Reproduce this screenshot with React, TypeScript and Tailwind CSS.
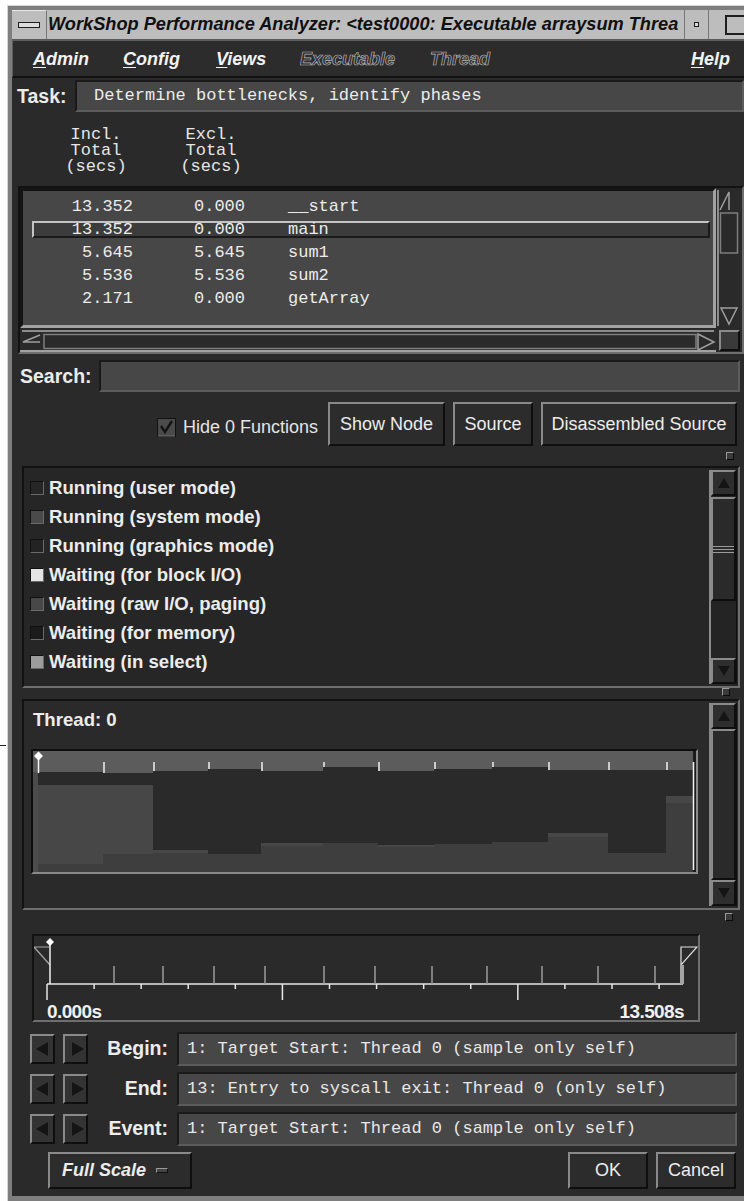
import React from 'react';

const sans = "font-['Liberation_Sans',Arial,sans-serif]";
const mono = "font-['Liberation_Mono','DejaVu_Sans_Mono',monospace]";
const raised = 'border-2 border-t-[#8a8a8a] border-l-[#8a8a8a] border-r-[#0e0e0e] border-b-[#0e0e0e]';
const sunken = 'border-2 border-t-[#121212] border-l-[#121212] border-r-[#6e6e6e] border-b-[#6e6e6e]';
const field = 'bg-[#474747] border-2 border-t-[#1a1a1a] border-l-[#1a1a1a] border-r-[#5c5c5c] border-b-[#5c5c5c]';

const functions = [
  { incl: '13.352', excl: '0.000', name: '__start' },
  { incl: '13.352', excl: '0.000', name: 'main', selected: true },
  { incl: '5.645', excl: '5.645', name: 'sum1' },
  { incl: '5.536', excl: '5.536', name: 'sum2' },
  { incl: '2.171', excl: '0.000', name: 'getArray' },
];

const states = [
  { label: 'Running (user mode)', swatch: 'bg-[#262626]' },
  { label: 'Running (system mode)', swatch: 'bg-[#4a4a4a]' },
  { label: 'Running (graphics mode)', swatch: 'bg-[#232323]' },
  { label: 'Waiting (for block I/O)', swatch: 'bg-[#e4e4e4]' },
  { label: 'Waiting (raw I/O, paging)', swatch: 'bg-[#484848]' },
  { label: 'Waiting (for memory)', swatch: 'bg-[#1b1b1b]' },
  { label: 'Waiting (in select)', swatch: 'bg-[#9c9c9c]' },
];

// per sample: x0, x1, end of top band, end of dark band, end of mid band
const samples = [
  [40, 105, 772, 785, 864],
  [105, 155, 773, 785, 854],
  [155, 210, 771, 850, 853],
  [210, 263, 769, 854, 854],
  [263, 325, 771, 843, 846],
  [325, 380, 767, 843, 843],
  [380, 436, 771, 845, 847],
  [436, 494, 769, 844, 844],
  [494, 550, 767, 842, 842],
  [550, 610, 770, 833, 837],
  [610, 668, 770, 853, 853],
  [668, 695, 770, 796, 803],
];

const sampleMarks = [114, 163, 214, 265, 324, 375, 432, 487, 542, 598, 655];

const events = [
  { label: 'Begin:', value: '1: Target Start: Thread 0 (sample only self)' },
  { label: 'End:', value: '13: Entry to syscall exit: Thread 0 (only self)' },
  { label: 'Event:', value: '1: Target Start: Thread 0 (sample only self)' },
];

function Sash({ left }: { left: string }) {
  return <div className={`h-[8px] w-[8px] bg-[#3a3a3a] border border-t-[#9a9a9a] border-l-[#9a9a9a] border-r-[#0a0a0a] border-b-[#0a0a0a] ${left}`} />;
}

function ArrowBtn({ dir }: { dir: 'up' | 'down' }) {
  return (
    <div className={`flex h-[26px] shrink-0 items-center justify-center bg-[#2e2e2e] ${raised}`}>
      <svg width="14" height="12" viewBox="0 0 14 12">
        <polygon points={dir === 'up' ? '7,1 13,11 1,11' : '1,1 13,1 7,11'} fill="#151515" />
      </svg>
    </div>
  );
}

function ScrollBar({ thumb, grip }: { thumb: string; grip?: boolean }) {
  return (
    <div className="flex w-[28px] flex-col border-l-2 border-l-[#8a8a8a] border-r border-r-[#101010] bg-[#242424]">
      <ArrowBtn dir="up" />
      <div className={`flex flex-col justify-center bg-[#2a2a2a] ${raised} ${thumb}`}>
        {grip && (
          <div className="flex flex-col gap-[2px]">
            <div className="h-[1px] bg-[#9a9a9a]" />
            <div className="h-[1px] bg-[#9a9a9a]" />
            <div className="h-[1px] bg-[#9a9a9a]" />
          </div>
        )}
      </div>
      <div className="flex-1" />
      <ArrowBtn dir="down" />
    </div>
  );
}

function Button({ label, className }: { label: string; className: string }) {
  return (
    <div className={`flex items-center justify-center bg-[#2c2c2c] text-[18px] text-[#ececec] ${raised} ${className}`}>
      {label}
    </div>
  );
}

function TitleBar() {
  return (
    <div className="flex h-[30px] bg-[#bdbdbd] border-b border-b-[#5a5a5a]">
      <div className="flex w-[35px] items-center justify-center border-r border-r-[#777] border-t border-t-[#e8e8e8]">
        <div className="h-[6px] w-[22px] border border-[#1e1e1e] bg-[#dcdcdc]" />
      </div>
      <div className="w-[637px] overflow-hidden whitespace-nowrap pl-[1px] text-[18.2px] font-bold italic leading-[29px] text-[#101010]">
        WorkShop Performance Analyzer: &lt;test0000: Executable arraysum Threa
      </div>
      <div className="flex w-[24px] items-center justify-center border-l border-l-[#777]">
        <div className="h-[5px] w-[5px] border border-[#1e1e1e] bg-[#dcdcdc]" />
      </div>
      <div className="flex w-[36px] items-center justify-end border-l border-l-[#777]">
        <div className="h-[20px] w-[19px] border-2 border-r-0 border-[#1e1e1e]" />
      </div>
    </div>
  );
}

function MenuBar() {
  const off = 'text-transparent [-webkit-text-stroke:0.7px_#b4b4b4]';
  return (
    <div className="flex h-[38px] items-center border-t border-l border-[#5e5e5e] border-b-2 border-b-[#111] bg-[#2c2c2c] pl-[20px] pt-[2px] text-[18px] font-bold italic text-[#f2f2f2]">
      <span className="w-[90px]"><span className="underline underline-offset-2">A</span>dmin</span>
      <span className="w-[93px]"><span className="underline underline-offset-2">C</span>onfig</span>
      <span className="w-[84px]"><span className="underline underline-offset-2">V</span>iews</span>
      <span className={`w-[130px] ${off}`}>Executable</span>
      <span className={`flex-1 ${off}`}>Thread</span>
      <span className="pr-[14px]"><span className="underline underline-offset-2">H</span>elp</span>
    </div>
  );
}

function FunctionList() {
  return (
    <div className={`ml-[6px] flex h-[168px] w-[726px] flex-col ${sunken}`}>
      <div className="flex h-[140px]">
        <div className="w-[696px] border-[3px] border-t-[#141414] border-l-[#141414] border-r-[#a2a2a2] border-b-[#a2a2a2] bg-[#474747] pt-[4px]">
          {functions.map((f) => (
            <div key={f.name} className={`relative flex h-[23px] items-center ${mono} text-[17px] text-[#ececec]`}>
              {f.selected && (
                <div className="absolute left-[9px] right-[3px] top-[3px] bottom-[3px] border-2 border-t-[#c4c4c4] border-l-[#c4c4c4] border-r-[#1a1a1a] border-b-[#1a1a1a] bg-[#3c3c3c]" />
              )}
              <span className="relative w-[110px] text-right">{f.incl}</span>
              <span className="relative w-[112px] text-right">{f.excl}</span>
              <span className="relative ml-[43px]">{f.name}</span>
            </div>
          ))}
        </div>
        <svg width="24" height="140" viewBox="0 0 24 140" className="ml-[1px]">
          <rect x="0" y="0" width="24" height="140" fill="#2a2a2a" />
          <line x1="1" y1="2" x2="1" y2="138" stroke="#8c8c8c" strokeWidth="2" />
          <polyline points="3,22 12,4 12,22" fill="none" stroke="#9e9e9e" strokeWidth="1.5" />
          <rect x="3.5" y="25" width="17" height="40" fill="none" stroke="#7e7e7e" strokeWidth="1.5" />
          <polygon points="4,120 20,120 12,136" fill="none" stroke="#9e9e9e" strokeWidth="1.5" />
        </svg>
      </div>
      <div className="mt-[2px] flex h-[22px]">
        <svg width="696" height="22" viewBox="0 0 696 22">
          <rect x="0" y="0" width="696" height="22" fill="#2a2a2a" />
          <line x1="2" y1="1" x2="694" y2="1" stroke="#8c8c8c" strokeWidth="2" />
          <polyline points="20,5 3,12 20,12" fill="none" stroke="#9e9e9e" strokeWidth="1.5" />
          <rect x="24" y="4.5" width="652" height="14" fill="none" stroke="#7e7e7e" strokeWidth="1.5" />
          <polygon points="678,4 694,12 678,20" fill="none" stroke="#9e9e9e" strokeWidth="1.5" />
          <line x1="0" y1="21" x2="696" y2="21" stroke="#a2a2a2" strokeWidth="2" />
        </svg>
        <div className={`ml-[3px] h-[21px] w-[21px] bg-[#3a3a3a] ${raised}`} />
      </div>
    </div>
  );
}

function ThreadChart() {
  return (
    <svg width="663" height="121" viewBox="35 751 663 121" className="block">
      <rect x="35" y="751" width="663" height="121" fill="#1c1c1c" />
      <rect x="35" y="751" width="5" height="21" fill="#5c5c5c" />
      <rect x="35" y="772" width="5" height="100" fill="#4c4c4c" />
      {samples.map(([x0, x1, a, b, c]) => (
        <g key={x0}>
          <rect x={x0} y="751" width={x1 - x0} height={a - 751} fill="#5c5c5c" />
          <rect x={x0} y={a} width={x1 - x0} height={b - a} fill="#2a2a2a" />
          <rect x={x0} y={b} width={x1 - x0} height={c - b} fill="#474747" />
          <rect x={x0} y={c} width={x1 - x0} height={872 - c} fill="#3e3e3e" />
        </g>
      ))}
      {samples.slice(1).map(([x0, , a]) => (
        <line key={x0} x1={x0 + 1} y1="762" x2={x0 + 1} y2={a} stroke="#efefef" strokeWidth="1.5" />
      ))}
      <line x1="40.5" y1="756" x2="40.5" y2="773" stroke="#f4f4f4" strokeWidth="1.5" />
      <polygon points="40.5,751.5 45,756 40.5,760.5 36,756" fill="#ffffff" />
      <line x1="695.5" y1="762" x2="695.5" y2="870" stroke="#f4f4f4" strokeWidth="1.5" />
    </svg>
  );
}

function Timeline() {
  const step = 636 / 13.508;
  return (
    <div className={`ml-[20px] mt-[2px] h-[88px] w-[668px] bg-[#2a2a2a] ${sunken}`}>
      <svg width="664" height="68" viewBox="34 934 664 68" className="block">
        <line x1="47" y1="982" x2="683" y2="982" stroke="#e6e6e6" strokeWidth="1.5" />
        {Array.from({ length: 14 }, (_, k) => (
          <line key={k} x1={47 + step * k} y1="982" x2={47 + step * k} y2={k % 5 === 0 ? 998 : 987} stroke="#e6e6e6" strokeWidth="1.5" />
        ))}
        {sampleMarks.map((x) => (
          <line key={x} x1={x} y1="964" x2={x} y2="982" stroke="#9c9c9c" strokeWidth="1.5" />
        ))}
        <polyline points="50,945 34,945 50,963" fill="none" stroke="#a8a8a8" strokeWidth="1.2" />
        <line x1="50" y1="940" x2="50" y2="982" stroke="#f0f0f0" strokeWidth="1.5" />
        <polygon points="50,936 54,940 50,944 46,940" fill="#ffffff" />
        <polygon points="681,945 697,945 681,963" fill="none" stroke="#e0e0e0" strokeWidth="1.2" />
        <rect x="680" y="963" width="4" height="19" fill="#a4a4a4" />
      </svg>
      <div className="flex h-[16px] items-center justify-between pl-[13px] pr-[14px] text-[19px] font-bold tracking-[-0.6px] text-[#f0f0f0]">
        <span>0.000s</span>
        <span>13.508s</span>
      </div>
    </div>
  );
}

function StepButtons() {
  return (
    <div className="ml-[18px] flex gap-[8px]">
      {['4,13 16,6 16,20', '7,6 19,13 7,20'].map((pts) => (
        <div key={pts} className={`h-[30px] w-[25px] bg-[#333] ${raised}`}>
          <svg width="21" height="26" viewBox="0 0 21 26">
            <polygon points={pts} fill="#141414" />
          </svg>
        </div>
      ))}
    </div>
  );
}

export default function App() {
  return (
    <div className={`flex h-[1201px] w-[744px] overflow-hidden bg-white pt-[5px] ${sans}`}>
      {/* stray edge of a neighbouring window */}
      <div className="w-[7px] shrink-0">
        <div className="mt-[740px] h-[1px] w-[6px] bg-[#222]" />
      </div>
      <div className="h-[1196px] border-l border-t border-[#d4d4d4] bg-[#7e7e7e] pl-[4px] pt-[4px] pb-[5px]">
        <div className="flex h-full w-[732px] flex-col bg-[#2a2a2a] text-[#ececec]">
          <TitleBar />
          <MenuBar />

          {/* task */}
          <div className="flex h-[36px] items-start">
            <span className="w-[63px] pl-[5px] pt-[9px] text-[19.5px] font-bold leading-none">Task:</span>
            <div className={`mt-[2px] h-[32px] flex-1 pl-[17px] ${mono} text-[17px] leading-[28px] ${field}`}>
              Determine bottlenecks, identify phases
            </div>
          </div>

          {/* column headers */}
          <div className={`flex h-[72px] pt-[13px] ${mono} whitespace-pre text-[17px] leading-[16px] text-[#e6e6e6]`}>
            <div className="ml-[44px] w-[80px] text-center">{'Incl.\nTotal\n(secs)'}</div>
            <div className="ml-[35px] w-[80px] text-center">{'Excl.\nTotal\n(secs)'}</div>
          </div>

          <FunctionList />

          {/* search */}
          <div className="flex h-[42px] items-start">
            <span className="w-[87px] pl-[8px] pt-[13px] text-[19.5px] font-bold leading-none">Search:</span>
            <div className={`mt-[6px] h-[32px] w-[641px] ${field}`} />
          </div>

          {/* list options */}
          <div className="flex h-[56px] items-start pt-[6px]">
            <div className="ml-[145px] mt-[12px] flex items-center">
              <svg width="19" height="19" viewBox="0 0 19 19">
                <rect x="0.5" y="0.5" width="18" height="18" fill="#4a4a4a" stroke="#121212" />
                <line x1="1" y1="18" x2="18" y2="18" stroke="#6e6e6e" />
                <polyline points="4,8 8,14 15,3" fill="none" stroke="#141414" strokeWidth="2.4" />
              </svg>
              <span className="ml-[7px] text-[18px] text-[#e4e4e4]">Hide 0 Functions</span>
            </div>
            <Button label="Show Node" className="ml-[10px] h-[44px] w-[117px]" />
            <Button label="Source" className="ml-[8px] h-[44px] w-[80px]" />
            <Button label="Disassembled Source" className="ml-[8px] h-[44px] w-[196px]" />
          </div>

          <div className="flex h-[14px] items-start">
            <Sash left="ml-[714px]" />
          </div>

          {/* states legend */}
          <div className={`ml-[10px] flex h-[222px] w-[718px] bg-[#262626] ${sunken}`}>
            <div className="flex-1 pt-[5px]">
              {states.map((s) => (
                <div key={s.label} className="flex h-[29px] items-center pl-[6px]">
                  <div className={`h-[14px] w-[14px] border border-t-[#111] border-l-[#111] border-r-[#6a6a6a] border-b-[#6a6a6a] ${s.swatch}`} />
                  <span className="ml-[5px] text-[18.6px] font-bold text-[#ececec]">{s.label}</span>
                </div>
              ))}
            </div>
            <div className="my-[2px] mr-[1px] flex">
              <ScrollBar thumb="h-[104px] mt-[1px]" grip />
            </div>
          </div>

          <div className="flex h-[11px] items-start">
            <Sash left="ml-[710px]" />
          </div>

          {/* thread usage */}
          <div className={`ml-[10px] flex h-[211px] w-[718px] bg-[#2a2a2a] ${sunken}`}>
            <div className="flex-1">
              <div className="h-[48px] pl-[9px] pt-[10px] text-[18.6px] font-bold leading-[18px]">Thread: 0</div>
              <div className="ml-[7px] h-[125px] w-[667px] border-2 border-t-[#0e0e0e] border-l-[#0e0e0e] border-r-[#8a8a8a] border-b-[#8a8a8a]">
                <ThreadChart />
              </div>
            </div>
            <div className="my-[2px] mr-[1px] flex">
              <ScrollBar thumb="flex-[1_1_auto] h-[150px]" />
            </div>
          </div>

          <div className="flex h-[22px] items-start pt-[3px]">
            <Sash left="ml-[713px]" />
          </div>

          <Timeline />

          {/* begin / end / event */}
          <div className="mt-[10px] flex flex-col gap-[6px]">
            {events.map((e) => (
              <div key={e.label} className="flex h-[34px] items-center">
                <StepButtons />
                <span className="w-[80px] text-right text-[19.5px] font-bold">{e.label}</span>
                <div className={`ml-[9px] h-[34px] w-[560px] pl-[8px] ${mono} text-[17px] leading-[30px] text-[#e8e8e8] ${field}`}>
                  {e.value}
                </div>
              </div>
            ))}
          </div>

          <div className="mt-[6px] flex h-[37px]">
            <div className={`ml-[36px] flex w-[144px] items-center bg-[#2c2c2c] pl-[12px] text-[18px] font-bold italic ${raised}`}>
              Full Scale
              <div className="ml-[10px] h-[5px] w-[12px] bg-[#444] border border-t-[#9a9a9a] border-l-[#9a9a9a] border-r-[#111] border-b-[#111]" />
            </div>
            <Button label="OK" className="ml-[376px] w-[80px]" />
            <Button label="Cancel" className="ml-[8px] w-[80px]" />
          </div>
        </div>
      </div>
    </div>
  );
}
